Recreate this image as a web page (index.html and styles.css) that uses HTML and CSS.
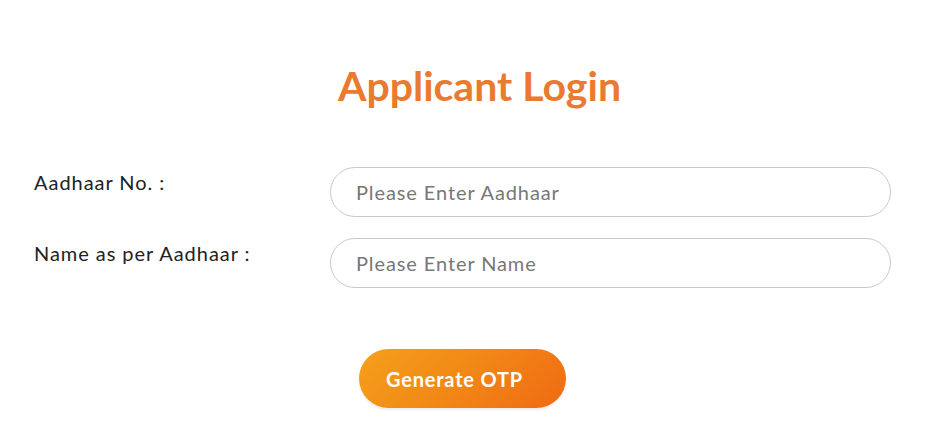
FILE: index.html
```html
<!DOCTYPE html>
<html lang="en">
<head>
<meta charset="utf-8">
<title>Applicant Login</title>
<link rel="stylesheet" href="styles.css">
</head>
<body>
<main class="page">
  <h1 class="title">Applicant Login</h1>
  <form class="form">
    <div class="row">
      <label class="label" for="aadhaar">Aadhaar No. :</label>
      <input class="field" id="aadhaar" type="text" placeholder="Please Enter Aadhaar">
    </div>
    <div class="row">
      <label class="label" for="name">Name as per Aadhaar :</label>
      <input class="field" id="name" type="text" placeholder="Please Enter Name">
    </div>
    <div class="actions">
      <button class="btn" type="button">Generate OTP</button>
    </div>
  </form>
</main>
</body>
</html>
```
FILE: styles.css
```css
html, body {
  margin: 0;
  padding: 0;
  background: #ffffff;
}
body {
  font-family: "Lato", "Open Sans", sans-serif;
  color: #222222;
}
.page {
  width: 941px;
  height: 442px;
  padding-top: 62px;
  box-sizing: border-box;
}
.title {
  margin: 0;
  padding-left: 18px;
  text-align: center;
  font-size: 41px;
  line-height: 48px;
  font-weight: 700;
  color: #e97a2f;
}
.form {
  margin-top: 57px;
  padding-left: 34px;
  display: flex;
  flex-direction: column;
  gap: 21px;
}
.row {
  display: grid;
  grid-template-columns: 296px 561px;
  align-items: start;
}
.label {
  padding-top: 3px;
  font-size: 20px;
  line-height: 24px;
  letter-spacing: 0.95px;
  color: #222222;
}
.field {
  box-sizing: border-box;
  height: 50px;
  width: 561px;
  margin: 0;
  padding: 0 0 0 25px;
  border: 1px solid #c9c9c9;
  border-radius: 25px;
  font-family: inherit;
  font-size: 20px;
  letter-spacing: 0.9px;
  color: #333;
  background: #fff;
  outline: none;
}
.field::placeholder {
  color: #777777;
}
.actions {
  padding-left: 325px;
  margin-top: 40px;
}
.btn {
  width: 207px;
  height: 59px;
  padding: 0 0 0 27px;
  text-align: left;
  border: none;
  border-radius: 30px;
  background: linear-gradient(135deg, #f4a01b 0%, #f28a17 45%, #ef6a12 100%);
  color: #ffffff;
  font-family: inherit;
  font-size: 20px;
  font-weight: 700;
  letter-spacing: 0.8px;
  cursor: pointer;
  box-shadow: 0 2px 3px rgba(0,0,0,0.08);
}
```
